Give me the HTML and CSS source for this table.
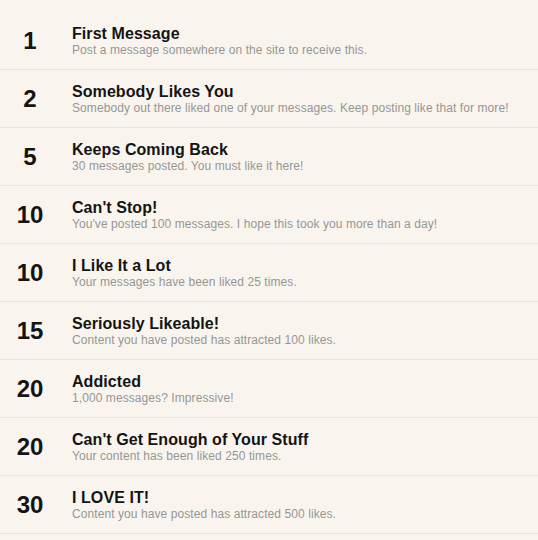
FILE: index.html
```html
<!DOCTYPE html>
<html>
<head>
<meta charset="utf-8">
<link rel="stylesheet" href="styles.css">
</head>
<body>
<ul class="trophies">
  <li class="trophy"><span class="points">1</span><div class="info"><h3 class="title">First Message</h3><p class="desc">Post a message somewhere on the site to receive this.</p></div></li>
  <li class="trophy"><span class="points">2</span><div class="info"><h3 class="title">Somebody Likes You</h3><p class="desc">Somebody out there liked one of your messages. Keep posting like that for more!</p></div></li>
  <li class="trophy"><span class="points">5</span><div class="info"><h3 class="title">Keeps Coming Back</h3><p class="desc">30 messages posted. You must like it here!</p></div></li>
  <li class="trophy"><span class="points">10</span><div class="info"><h3 class="title">Can't Stop!</h3><p class="desc">You've posted 100 messages. I hope this took you more than a day!</p></div></li>
  <li class="trophy"><span class="points">10</span><div class="info"><h3 class="title">I Like It a Lot</h3><p class="desc">Your messages have been liked 25 times.</p></div></li>
  <li class="trophy"><span class="points">15</span><div class="info"><h3 class="title">Seriously Likeable!</h3><p class="desc">Content you have posted has attracted 100 likes.</p></div></li>
  <li class="trophy"><span class="points">20</span><div class="info"><h3 class="title">Addicted</h3><p class="desc">1,000 messages? Impressive!</p></div></li>
  <li class="trophy"><span class="points">20</span><div class="info"><h3 class="title">Can't Get Enough of Your Stuff</h3><p class="desc">Your content has been liked 250 times.</p></div></li>
  <li class="trophy"><span class="points">30</span><div class="info"><h3 class="title">I LOVE IT!</h3><p class="desc">Content you have posted has attracted 500 likes.</p></div></li>
</ul>
</body>
</html>
```

FILE: styles.css
```css
html, body {
  margin: 0;
  padding: 0;
  background: #f9f5ee;
  font-family: "Liberation Sans", Arial, sans-serif;
}
.trophies {
  list-style: none;
  margin: 0;
  padding: 12px 0 0;
}
.trophy {
  display: flex;
  align-items: center;
  padding: 13px 0 12px;
  border-bottom: 1px solid #e8e5e1;
}
.points {
  width: 60px;
  flex: none;
  text-align: center;
  font-size: 24px;
  line-height: 28px;
  font-weight: bold;
  color: #141414;
}
.info {
  margin-left: 12px;
}
.title {
  margin: 0;
  font-size: 16px;
  line-height: 18px;
  font-weight: bold;
  letter-spacing: 0.07px;
  color: #141414;
}
.desc {
  margin: 0;
  font-size: 12px;
  line-height: 14px;
  letter-spacing: 0.08px;
  color: #969696;
}
```
